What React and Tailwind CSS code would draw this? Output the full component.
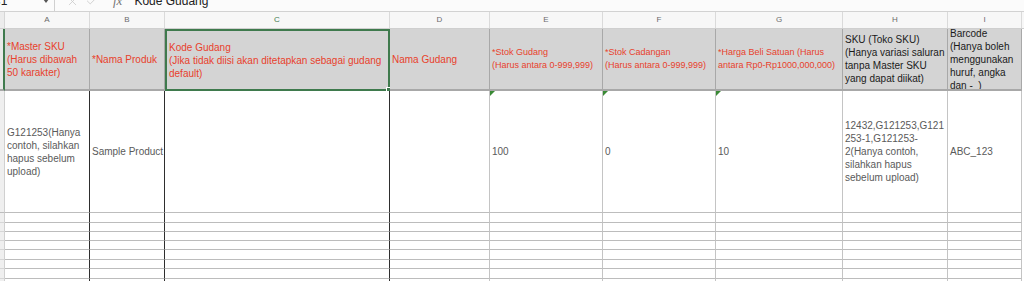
import React from 'react';
import { X, Check } from 'lucide-react';

const GRID =
  'grid grid-cols-[5px_85px_75px_225px_100px_113px_113px_127px_105px_74px_2px]';

const letters = ['A', 'B', 'C', 'D', 'E', 'F', 'G', 'H', 'I'];

const headers = [
  { lines: ['*Master SKU', '(Harus dibawah', '50 karakter)'], red: true },
  { lines: ['*Nama Produk'], red: true },
  {
    lines: ['Kode Gudang', '(Jika tidak diisi akan ditetapkan sebagai gudang', 'default)'],
    red: true,
    selected: true,
  },
  { lines: ['Nama Gudang'], red: true },
  { lines: ['*Stok Gudang', '(Harus antara 0-999,999)'], red: true, small: true },
  { lines: ['*Stok Cadangan', '(Harus antara 0-999,999)'], red: true, small: true },
  { lines: ['*Harga Beli Satuan (Harus', 'antara Rp0-Rp1000,000,000)'], red: true, small: true },
  { lines: ['SKU (Toko SKU)', '(Hanya variasi saluran', 'tanpa Master SKU', 'yang dapat diikat)'] },
  { lines: ['Barcode', '(Hanya boleh', 'menggunakan', 'huruf, angka', 'dan -  )'] },
];

const sample = [
  ['G121253(Hanya', 'contoh, silahkan', 'hapus sebelum', 'upload)'],
  ['Sample Product'],
  [],
  [],
  ['100'],
  ['0'],
  ['10'],
  ['12432,G121253,G121', '253-1,G121253-', '2(Hanya contoh,', 'silahkan hapus', 'sebelum upload)'],
  ['ABC_123'],
];

const commented = [4, 5, 6];
const thinRows = ['h-[10px]', 'h-[9px]', 'h-[9px]', 'h-[9px]', 'h-[10px]', 'h-[9px]', 'h-[10px]', 'h-[10px]'];

// columns A-C carry a dark right border below the header
const darkRight = (i) => i < 3;

const FormulaBar = () => (
  <div className="h-[12px] overflow-hidden border-b border-[#d2d2d2] bg-[#fbfbfb]">
    <div className="-mt-[10px] flex h-[22px] items-center text-[12px] text-[#222]">
      <span className="-ml-[8px] w-[50px]">C1</span>
      <span className="ml-[1px] h-0 w-0 border-x-[3px] border-t-[4px] border-x-transparent border-t-[#555]" />
      <span className="ml-[5px] h-[22px] w-px bg-[#d0d0d0]" />
      <X size={13} strokeWidth={1.4} className="ml-[11px] text-[#c9c9c9]" />
      <Check size={14} strokeWidth={1.4} className="ml-[6px] text-[#c9c9c9]" />
      <span className="ml-[14px] font-['Liberation_Serif',serif] text-[13px] italic text-[#777]">fx</span>
      <span className="ml-[12px]">Kode Gudang</span>
    </div>
  </div>
);

const ColumnHeader = () => (
  <div className={`${GRID} h-[17px] border-b border-[#cfcfcf] bg-[#f7f7f7]`}>
    <div className="border-r border-[#d6d6d6] bg-[#ececec]" />
    {letters.map((l) => (
      <div
        key={l}
        className={`flex items-center justify-center border-r border-[#dadada] text-[8px] ${
          l === 'C' ? 'text-[#3f7a4d]' : 'text-[#6b6b6b]'
        }`}
      >
        {l}
      </div>
    ))}
    <div />
  </div>
);

const HeaderRow = () => (
  <div className={`${GRID} h-[62px]`}>
    <div className="border-r-2 border-b-2 border-r-[#3f7a4d] border-b-[#a8a8a8] bg-[#e9e9e9]" />
    {headers.map((h, i) => (
      <div
        key={i}
        className={`relative flex items-center overflow-hidden bg-[#d4d4d4] px-[2px] leading-[13px] ${
          h.small ? 'text-[9px]' : 'text-[10px]'
        } ${h.red ? 'text-[#e8412c]' : 'text-[#1a1a1a]'} ${
          h.selected
            ? 'overflow-visible border-2 border-[#3f7a4d]'
            : 'border-r border-b-2 border-r-[#a8a8a8] border-b-[#a8a8a8]'
        }`}
      >
        <div className="whitespace-nowrap">
          {h.lines.map((t, j) => (
            <div key={j} className="whitespace-pre">{t}</div>
          ))}
        </div>
        {h.selected && (
          <span className="absolute -right-[3px] -bottom-[3px] h-[5px] w-[5px] border border-white bg-[#3f7a4d]" />
        )}
      </div>
    ))}
    <div />
  </div>
);

const DataRow = () => (
  <div className={`${GRID} h-[122px]`}>
    <div className="border-r border-b border-r-[#d0d0d0] border-b-[#bdbdbd] bg-[#efefef]" />
    {sample.map((lines, i) => (
      <div
        key={i}
        className={`relative flex items-center border-r border-b border-b-[#bdbdbd] px-[2px] text-[10px] leading-[13px] text-[#5a5a5a] ${
          darkRight(i) ? 'border-r-[#2e2e2e]' : 'border-r-[#c4c4c4]'
        }`}
      >
        <div className="whitespace-nowrap">
          {lines.map((t, j) => (
            <div key={j}>{t}</div>
          ))}
        </div>
        {commented.includes(i) && (
          <span className="absolute top-0 left-0 h-0 w-0 border-t-[5px] border-r-[5px] border-t-[#3a8a35] border-r-transparent" />
        )}
      </div>
    ))}
    <div />
  </div>
);

const ThinRow = ({ h }) => (
  <div className={`${GRID} ${h}`}>
    <div className="border-r border-b border-r-[#d0d0d0] border-b-[#d6d6d6] bg-[#efefef]" />
    {letters.map((l, i) => (
      <div
        key={l}
        className={`border-r border-b border-b-[#bcbcbc] ${
          darkRight(i) ? 'border-r-[#2e2e2e]' : 'border-r-[#c4c4c4]'
        }`}
      />
    ))}
    <div />
  </div>
);

const App = () => (
  <div className="h-[281px] w-[1024px] overflow-hidden bg-white font-['Liberation_Sans',Arial,sans-serif]">
    <FormulaBar />
    <ColumnHeader />
    <HeaderRow />
    <DataRow />
    {thinRows.map((h, i) => (
      <ThinRow key={i} h={h} />
    ))}
  </div>
);

export default App;
